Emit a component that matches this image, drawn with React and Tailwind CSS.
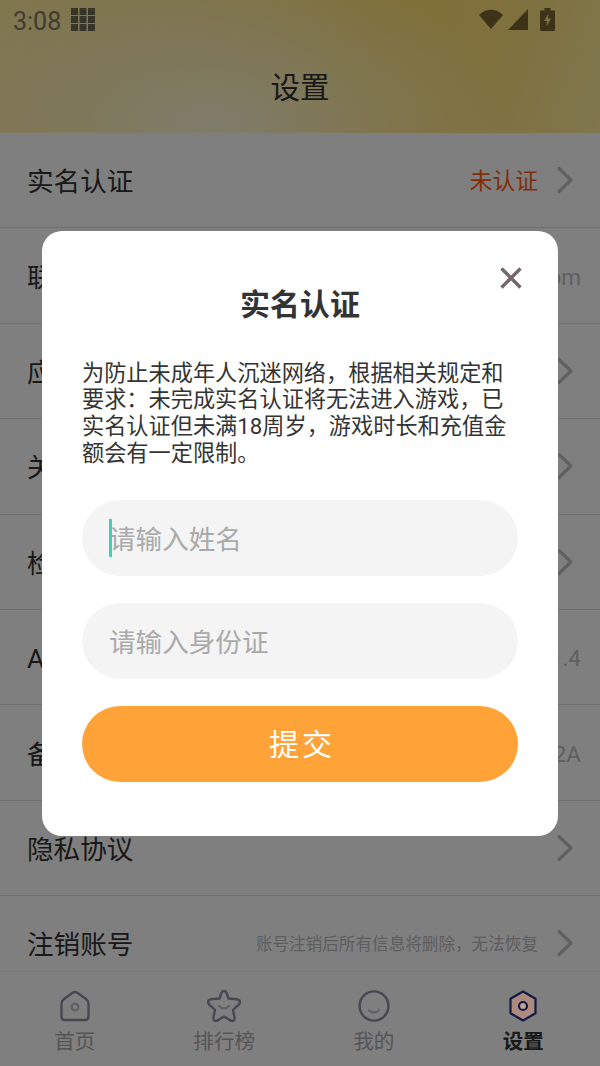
import React from "react";

const FONT = "font-['Roboto','Noto_Sans_CJK_SC',sans-serif]";

function Chevron() {
  return (
    <svg width="18" height="28" viewBox="0 0 18 28" className="ml-[18px] shrink-0" fill="none">
      <path d="M3 2.5 L15 14 L3 25.5" stroke="#c0c0c0" strokeWidth="3.2" strokeLinecap="round" strokeLinejoin="round" />
    </svg>
  );
}

function Row({ label, value, valueClass = "text-[22.5px] text-[#bebebe]", chevron = true }) {
  return (
    <div className={chevron ? "flex h-[95.4px] shrink-0 items-center border-b border-[#dcdcdc] pl-[27px] pr-[26px]" : "flex h-[95.4px] shrink-0 items-center border-b border-[#dcdcdc] pl-[27px] pr-[19px]"}>
      <span className="flex-1 pt-[4px] text-[26.6px] text-[#333]">{label}</span>
      {value && <span className={`pt-[4px] ${valueClass}`}>{value}</span>}
      {chevron && <Chevron />}
    </div>
  );
}

function Tab({ label, active, children }) {
  return (
    <div className="flex flex-col items-center">
      <div className="flex h-[34px] items-center justify-center">{children}</div>
      <span className={active ? "mt-[2px] text-[20.6px] leading-[34px] font-bold text-[#333]" : "mt-[2px] text-[20.6px] leading-[34px] text-[#aaa]"}>{label}</span>
    </div>
  );
}

export default function App() {
  return (
    <div className={`relative flex h-[1066px] w-[600px] flex-col overflow-hidden bg-white ${FONT}`}>
      <header className="h-[133px] shrink-0 bg-[radial-gradient(ellipse_300px_170px_at_210px_125px,#fff8d6_0%,rgba(255,245,190,0)_100%),linear-gradient(110deg,#ffee9e_0%,#ffe586_30%,#ffe070_60%,#ffe27c_80%,#ffee9c_100%)]">
        <div className="flex h-[40px] items-center pl-[13px] pr-[45px] pt-[2px]">
          <span className="text-[25px] text-[#7c7a62] leading-none">3:08</span>
          <svg width="24" height="23" viewBox="0 0 24 23" className="mb-[4px] ml-[10px]" fill="#6e6a50">
            <rect x="0" y="0" width="7" height="7" /><rect x="8.5" y="0" width="7" height="7" /><rect x="17" y="0" width="7" height="7" />
            <rect x="0" y="8" width="7" height="7" /><rect x="8.5" y="8" width="7" height="7" /><rect x="17" y="8" width="7" height="7" />
            <rect x="0" y="16" width="7" height="7" /><rect x="8.5" y="16" width="7" height="7" /><rect x="17" y="16" width="7" height="7" />
          </svg>
          <div className="mb-[4px] ml-auto flex items-center">
            <svg width="24" height="22" viewBox="0 0 24 22"><path d="M0 7 C7 0 17 0 24 7 L12 21 Z" fill="#7a6630" /></svg>
            <svg width="20" height="21" viewBox="0 0 20 21" className="ml-[5px]"><path d="M20 0 V21 H0 Z" fill="#7a6630" /></svg>
            <svg width="15" height="23" viewBox="0 0 15 23" className="ml-[12px]">
              <path d="M4.5 0 H10.5 V2.5 H14 A1 1 0 0 1 15 3.5 V22 A1 1 0 0 1 14 23 H1 A1 1 0 0 1 0 22 V3.5 A1 1 0 0 1 1 2.5 H4.5 Z" fill="#7a6630" />
              <path d="M8.5 5.5 L4 13 H7 L6.5 18.5 L11 10.5 H8 Z" fill="#ffe27c" />
            </svg>
          </div>
        </div>
        <div className="flex h-[93px] items-center justify-center pt-[4px]">
          <span className="text-[29.5px] leading-none text-[#333]">设置</span>
        </div>
      </header>

      <main className="flex min-h-0 flex-1 flex-col overflow-hidden bg-white">
        <Row label="实名认证" value="未认证" valueClass="text-[22.8px] text-[#ff5a14]" />
        <Row label="联系邮箱" value="kefu@163.com" chevron={false} />
        <Row label="应用权限" />
        <Row label="关于我们" />
        <Row label="检查更新" />
        <Row label="APP版本" value="1.1.4" chevron={false} />
        <Row label="备案号" value="粤ICP备2021000012A" chevron={false} />
        <Row label="隐私协议" />
        <Row label="注销账号" value="账号注销后所有信息将删除，无法恢复" valueClass="text-[16.6px] text-[#bbb]" />
      </main>

      <nav className="grid h-[95px] shrink-0 grid-cols-4 border-t border-[#f2f2f2] bg-white pr-[2px] pt-[17px]">
        <Tab label="首页">
          <svg width="30" height="32" viewBox="0 0 30 32" fill="none">
            <path d="M13 2.6 Q15 1.4 17 2.6 L26 9 Q28.5 10.8 28.5 13.5 V26.5 Q28.5 30 25 30 H5 Q1.5 30 1.5 26.5 V13.5 Q1.5 10.8 4 9 Z" stroke="#8f8fa4" strokeWidth="2.4" strokeLinejoin="round" />
            <circle cx="15" cy="17" r="3.4" stroke="#c0c0d0" strokeWidth="2.2" />
          </svg>
        </Tab>
        <Tab label="排行榜">
          <svg width="34" height="34" viewBox="0 0 34 34" fill="none">
            <path d="M17 2 Q19 2 20 5 L21.5 9.5 L28 10 Q33 10.5 33 13 Q33 15 29 18 L26 21 L27.5 28 Q28 32 25.5 32 Q24 32 21 30 L17 27.5 L13 30 Q10 32 8.5 32 Q6 32 6.5 28 L8 21 L5 18 Q1 15 1 13 Q1 10.5 6 10 L12.5 9.5 L14 5 Q15 2 17 2 Z" stroke="#8f8fa4" strokeWidth="2.4" strokeLinejoin="round" />
            <path d="M12 17 Q17 22 22 17" stroke="#c0c0d0" strokeWidth="2.2" strokeLinecap="round" />
          </svg>
        </Tab>
        <Tab label="我的">
          <svg width="32" height="32" viewBox="0 0 32 32" fill="none">
            <ellipse cx="16" cy="16" rx="14.4" ry="14.6" stroke="#8f8fa4" strokeWidth="2.4" />
            <path d="M11 20.5 Q16 24.5 21 20.5" stroke="#c0c0d0" strokeWidth="2.2" strokeLinecap="round" />
          </svg>
        </Tab>
        <Tab label="设置" active>
          <svg width="28" height="32" viewBox="0 0 28 32" fill="none" className="relative z-10">
            <path d="M14 1.5 L26.5 8.7 V23.3 L14 30.5 L1.5 23.3 V8.7 Z" fill="#ad8a7f" stroke="#121a44" strokeWidth="2.2" strokeLinejoin="round" />
            <circle cx="14" cy="16" r="4" fill="#c2a49a" stroke="#121a44" strokeWidth="2.2" />
          </svg>
        </Tab>
      </nav>

      <div className="absolute inset-0 flex items-center justify-center bg-black/50">
        <div className="relative flex h-[605px] w-[516px] flex-col rounded-[20px] bg-white px-[40px]">
          <svg width="22" height="22" viewBox="0 0 22 22" className="absolute right-[36px] top-[36px]" fill="none">
            <path d="M1.5 1.5 L20.5 20.5 M20.5 1.5 L1.5 20.5" stroke="#75686c" strokeWidth="3.4" />
          </svg>
          <h2 className="mt-[52px] text-center text-[30px] leading-[44px] font-bold text-[#333]">实名认证</h2>
          <p className="mt-[33px] w-[436px] text-[22.2px] leading-[26.7px] text-[#333]">
            为防止未成年人沉迷网络，根据相关规定和要求：未完成实名认证将无法进入游戏，已实名认证但未满18周岁，游戏时长和充值金额会有一定限制。
          </p>
          <div className="relative mt-[34px] h-[76px] w-[436px]">
            <input readOnly placeholder="请输入姓名" className="h-full w-full rounded-full bg-[#f4f4f4] pl-[27px] pt-[3px] text-[26.6px] outline-none placeholder:text-[#aaaaaa]" />
            <span className="absolute left-[27px] top-[19px] h-[38px] w-[3px] bg-[#2ed6bb]" />
          </div>
          <input readOnly placeholder="请输入身份证" className="mt-[27px] h-[76px] w-[436px] rounded-full bg-[#f4f4f4] pl-[27px] pt-[3px] text-[26.6px] outline-none placeholder:text-[#aaaaaa]" />
          <button className="mt-[27px] h-[76px] w-[436px] rounded-full bg-[#ffa238] pl-[4px] pt-[1px] text-[30px] tracking-[3px] text-white">提交</button>
        </div>
      </div>
    </div>
  );
}
